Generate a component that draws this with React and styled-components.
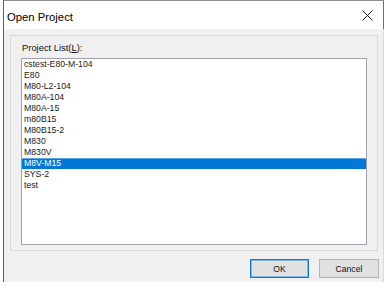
import React from "react";
import styled, { createGlobalStyle } from "styled-components";

const Global = createGlobalStyle`
  html, body { margin: 0; padding: 0; background: #ffffff; }
  body { font-family: "Liberation Sans", Arial, sans-serif; }
  * { box-sizing: border-box; }
`;

const Window = styled.div`
  margin-left: 3px;
  width: 381px;
  height: 282px;
  border-left: 1px solid #5f5f5f;
  border-top: 1px solid #8f8f8f;
  display: flex;
  flex-direction: column;
`;

const TitleBar = styled.div`
  height: 28px;
  flex: none;
  background: #ffffff;
  border-right: 1px solid #6f6f6f;
  display: flex;
  align-items: center;
  justify-content: space-between;
  padding: 0 10px 0 3px;
`;

const Title = styled.span`
  font-family: "Liberation Sans", Arial, sans-serif;
  font-size: 11.3px;
  color: #000;
  line-height: 14px;
  margin-top: 3px;
`;

const Body = styled.div`
  flex: 1;
  background: #f0f0f0;
  border-right: 1px solid #dadada;
  padding: 6px 5px 0 6px;
  display: flex;
  flex-direction: column;
`;

const Group = styled.div`
  height: 216px;
  border: 1px solid #d8d8d8;
  padding: 6px 10px 5px 10px;
  display: flex;
  flex-direction: column;
`;

const Label = styled.div`
  font-size: 9.4px;
  line-height: 11px;
  height: 11px;
  color: #111;
  margin: 0 0 5px 1px;
`;

const Key = styled.span`
  text-decoration: underline;
`;

const ListBox = styled.div`
  flex: 1;
  background: #ffffff;
  border: 1px solid #a2a2aa;
  display: flex;
  flex-direction: column;
`;

const Item = styled.div`
  height: 11px;
  line-height: 11px;
  font-size: 8.7px;
  padding-left: 2px;
  white-space: nowrap;
  color: ${(p) => (p.$selected ? "#ffffff" : "#1a1a1a")};
  background: ${(p) => (p.$selected ? "#0078d7" : "transparent")};
  box-shadow: ${(p) => (p.$selected ? "inset 0 1px 0 #5aa6e6" : "none")};
`;

const ButtonRow = styled.div`
  display: flex;
  justify-content: flex-end;
  gap: 10px;
  margin: 8px -1px 0 0;
`;

const Button = styled.button`
  width: ${(p) => p.$w}px;
  height: 19px;
  padding: 0;
  margin: 0;
  font-family: "Liberation Sans", Arial, sans-serif;
  font-size: 8.6px;
  color: #111;
  background: #e1e1e1;
  border: 1px solid ${(p) => (p.$default ? "#0a78d6" : "#b4b4b4")};
  box-shadow: ${(p) => (p.$default ? "inset 0 0 0 1px #7fb7e6" : "none")};
  display: flex;
  align-items: center;
  justify-content: center;
`;

const projects = [
  "cstest-E80-M-104",
  "E80",
  "M80-L2-104",
  "M80A-104",
  "M80A-15",
  "m80B15",
  "M80B15-2",
  "M830",
  "M830V",
  "M8V-M15",
  "SYS-2",
  "test",
];

export default function App() {
  return (
    <>
      <Global />
      <Window>
        <TitleBar>
          <Title>Open Project</Title>
          <svg width="11" height="11" viewBox="0 0 11 11">
            <path d="M0.5 0.5 L10.5 10.5 M10.5 0.5 L0.5 10.5" stroke="#222" strokeWidth="1" fill="none" />
          </svg>
        </TitleBar>
        <Body>
          <Group>
            <Label>
              Project List(<Key>L</Key>):
            </Label>
            <ListBox>
              {projects.map((p) => (
                <Item key={p} $selected={p === "M8V-M15"}>
                  {p}
                </Item>
              ))}
            </ListBox>
          </Group>
          <ButtonRow>
            <Button $w={59} $default>OK</Button>
            <Button $w={60}>Cancel</Button>
          </ButtonRow>
        </Body>
      </Window>
    </>
  );
}
